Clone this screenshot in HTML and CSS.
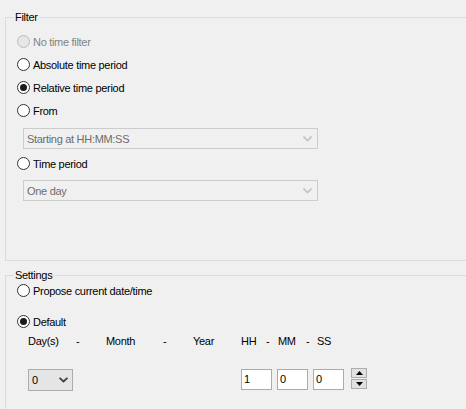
FILE: index.html
```html
<!DOCTYPE html>
<html>
<head>
<meta charset="utf-8">
<link rel="stylesheet" href="styles.css">
</head>
<body>
<div class="page">
  <div class="group filter">
    <span class="legend">Filter</span>
    <div class="row disabled"><span class="radio"></span><span>No time filter</span></div>
    <div class="row"><span class="radio"></span><span>Absolute time period</span></div>
    <div class="row"><span class="radio checked"></span><span>Relative time period</span></div>
    <div class="row"><span class="radio"></span><span>From</span></div>
    <div class="combo combo1"><span>Starting at HH:MM:SS</span><svg class="chev" width="9" height="6" viewBox="0 0 9 6"><path d="M0.5 0.5 L4.5 4.5 L8.5 0.5" fill="none" stroke="#c4c4c4" stroke-width="1.6"/></svg></div>
    <div class="row row-tp"><span class="radio"></span><span>Time period</span></div>
    <div class="combo combo2"><span>One day</span><svg class="chev" width="9" height="6" viewBox="0 0 9 6"><path d="M0.5 0.5 L4.5 4.5 L8.5 0.5" fill="none" stroke="#c4c4c4" stroke-width="1.6"/></svg></div>
  </div>
  <div class="group settings">
    <span class="legend">Settings</span>
    <div class="row"><span class="radio"></span><span>Propose current date/time</span></div>
    <div class="row row-def"><span class="radio checked"></span><span>Default</span></div>
    <div class="labels">
      <span class="c-day">Day(s)</span>
      <span class="c-d1">-</span>
      <span class="c-month">Month</span>
      <span class="c-d2">-</span>
      <span class="c-year">Year</span>
      <span class="c-hh">HH</span>
      <span class="c-d3">-</span>
      <span class="c-mm">MM</span>
      <span class="c-d4">-</span>
      <span class="c-ss">SS</span>
    </div>
    <div class="inputs">
      <div class="daysel"><span>0</span><svg width="9" height="6" viewBox="0 0 9 6"><path d="M0.5 0.8 L4.5 4.5 L8.5 0.8" fill="none" stroke="#404040" stroke-width="1.8"/></svg></div>
      <div class="tb tb1">1</div>
      <div class="tb">0</div>
      <div class="tb">0</div>
      <div class="spin">
        <div class="sb"><svg width="7" height="4" viewBox="0 0 7 4"><path d="M0 4 L3.5 0 L7 4 Z" fill="#000"/></svg></div>
        <div class="sb"><svg width="7" height="4" viewBox="0 0 7 4"><path d="M0 0 L3.5 4 L7 0 Z" fill="#000"/></svg></div>
      </div>
    </div>
  </div>
</div>
</body>
</html>
```
FILE: styles.css
```css
html, body {
  margin: 0;
  padding: 0;
  background: #f0f0f0;
  overflow: hidden;
}
body {
  width: 466px;
  height: 409px;
  font-family: "Liberation Sans", Arial, sans-serif;
  font-size: 11px;
  letter-spacing: -0.3px;
  color: #000;
}
.page {
  padding: 17px 0 0 5px;
  display: flex;
  flex-direction: column;
}
.group {
  position: relative;
  border: 1px solid #dcdcdc;
  border-right: none;
  width: 461px;
  box-sizing: border-box;
}
.legend {
  position: absolute;
  left: 8px;
  top: -7px;
  line-height: 13px;
  padding: 0 1px;
  background: #f0f0f0;
}
.filter {
  height: 244px;
  padding: 12px 0 0 11px;
}
.settings {
  margin-top: 14px;
  height: 134px;
  border-bottom: none;
  padding: 3px 0 0 11px;
}
.row {
  height: 23px;
  display: flex;
  align-items: center;
  gap: 3px;
}
.row.disabled {
  color: #838383;
}
.radio {
  width: 13px;
  height: 13px;
  box-sizing: border-box;
  border: 1px solid #333;
  border-radius: 50%;
  background: #fff;
  display: flex;
  align-items: center;
  justify-content: center;
  flex: none;
}
.disabled .radio {
  border-color: #bcbcbc;
  background: #e6e6e6;
}
.radio.checked::after {
  content: "";
  width: 7px;
  height: 7px;
  border-radius: 50%;
  background: #1a1a1a;
}
.combo {
  margin-left: 6px;
  width: 295px;
  height: 21px;
  box-sizing: border-box;
  border: 1px solid #cccccc;
  background: #f0f0f0;
  color: #6d6d6d;
  display: flex;
  align-items: center;
  justify-content: space-between;
  padding: 0 5px 0 3px;
}
.combo1 { margin-top: 6px; }
.row-tp { margin-top: 3px; }
.combo2 { margin-top: 5px; }
.row-def { margin-top: 8px; }
.labels {
  display: flex;
  height: 14px;
  align-items: center;
  margin-top: 1px;
  padding-left: 11px;
}
.labels span { flex: none; }
.c-day { width: 48px; }
.c-d1 { width: 30px; }
.c-month { width: 57px; }
.c-d2 { width: 30px; }
.c-year { width: 48px; }
.c-hh { width: 25px; }
.c-d3 { width: 12px; }
.c-mm { width: 28px; }
.c-d4 { width: 11px; }
.c-ss { width: 20px; }
.inputs {
  display: flex;
  align-items: flex-start;
  margin-top: 21px;
  padding-left: 11px;
}
.daysel {
  width: 45px;
  height: 22px;
  box-sizing: border-box;
  border: 1px solid #acacac;
  background: #e5e5e5;
  display: flex;
  align-items: center;
  justify-content: space-between;
  padding: 0 4px 0 3px;
  margin-right: 168px;
}
.tb {
  width: 31px;
  height: 21px;
  box-sizing: border-box;
  border: 1px solid #ababab;
  background: #fff;
  padding: 0 2px;
  line-height: 19px;
  margin-right: 5px;
}
.spin {
  margin-left: 2px;
  margin-top: -1px;
  display: flex;
  flex-direction: column;
  gap: 1px;
}
.sb {
  width: 16px;
  height: 10px;
  box-sizing: border-box;
  border: 1px solid #adadad;
  background: #e1e1e1;
  display: flex;
  align-items: center;
  justify-content: center;
}
```
